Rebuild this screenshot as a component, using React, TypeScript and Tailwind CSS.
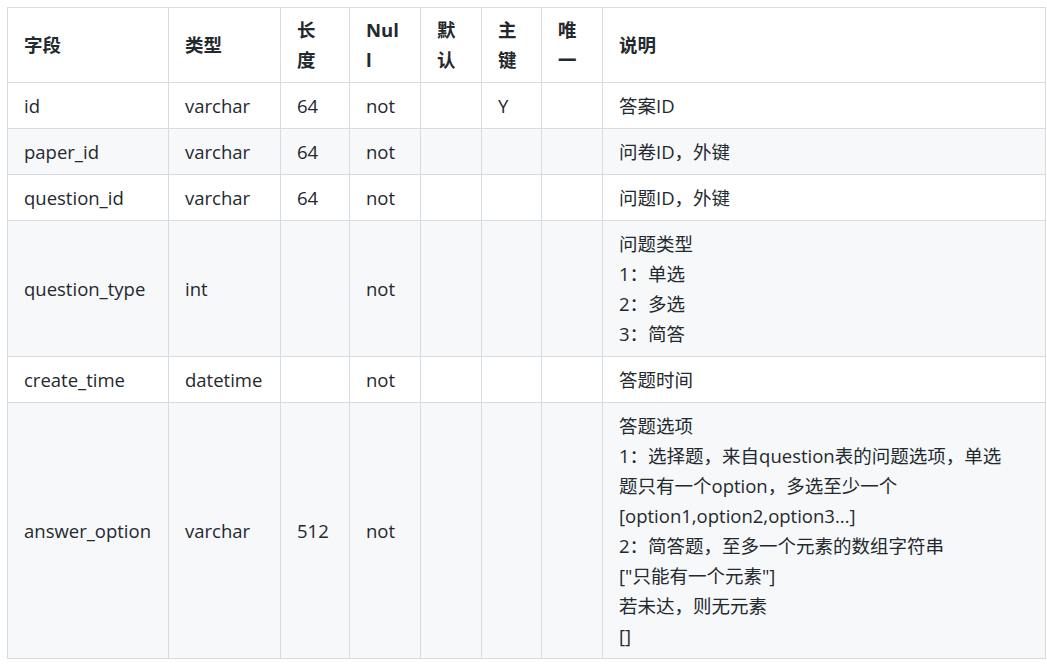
const widths = [161, 112, 69, 71, 61, 60, 61, 443];
const head = ["字段", "类型", "长度", "Null", "默认", "主键", "唯一", "说明"];
const rows: (string | string[])[][] = [
  ["id", "varchar", "64", "not", "", "Y", "", "答案ID"],
  ["paper_id", "varchar", "64", "not", "", "", "", "问卷ID，外键"],
  ["question_id", "varchar", "64", "not", "", "", "", "问题ID，外键"],
  ["question_type", "int", "", "not", "", "", "", ["问题类型", "1：单选", "2：多选", "3：简答"]],
  ["create_time", "datetime", "", "not", "", "", "", "答题时间"],
  ["answer_option", "varchar", "512", "not", "", "", "", ["答题选项", "1：选择题，来自question表的问题选项，单选", "题只有一个option，多选至少一个", "[option1,option2,option3...]", "2：简答题，至多一个元素的数组字符串", "[\"只能有一个元素\"]", "若未达，则无元素", "[]"]],
];
export default function App() {
  return (
    <div className="bg-white w-[1047px] h-[665px] pt-[7px] pl-[7px]" style={{ fontFamily: '"Open Sans", "Noto Sans CJK SC", sans-serif' }}>
      <table className="table-fixed border-collapse text-[18.5px] leading-[30px] text-[#24292e]" style={{ width: 1038 }}>
        <colgroup>
          {widths.map((w, i) => <col key={i} style={{ width: w }} />)}
        </colgroup>
        <thead>
          <tr className="bg-white">
            {head.map((h, i) => (
              <th key={i} className="border border-[#d7dce3] px-4 py-[7px] text-left font-bold align-middle break-all">
                {i === 2 ? <>长<br />度</> : h}
              </th>
            ))}
          </tr>
        </thead>
        <tbody>
          {rows.map((r, ri) => (
            <tr key={ri} className={ri % 2 ? "bg-[#f6f8fa]" : "bg-white"}>
              {r.map((c, ci) => (
                <td key={ci} className="border border-[#d7dce3] px-4 py-[7.5px] align-middle break-words whitespace-nowrap">
                  {Array.isArray(c) ? c.map((l, li) => <div key={li}>{l}</div>) : c}
                </td>
              ))}
            </tr>
          ))}
        </tbody>
      </table>
    </div>
  );
}
